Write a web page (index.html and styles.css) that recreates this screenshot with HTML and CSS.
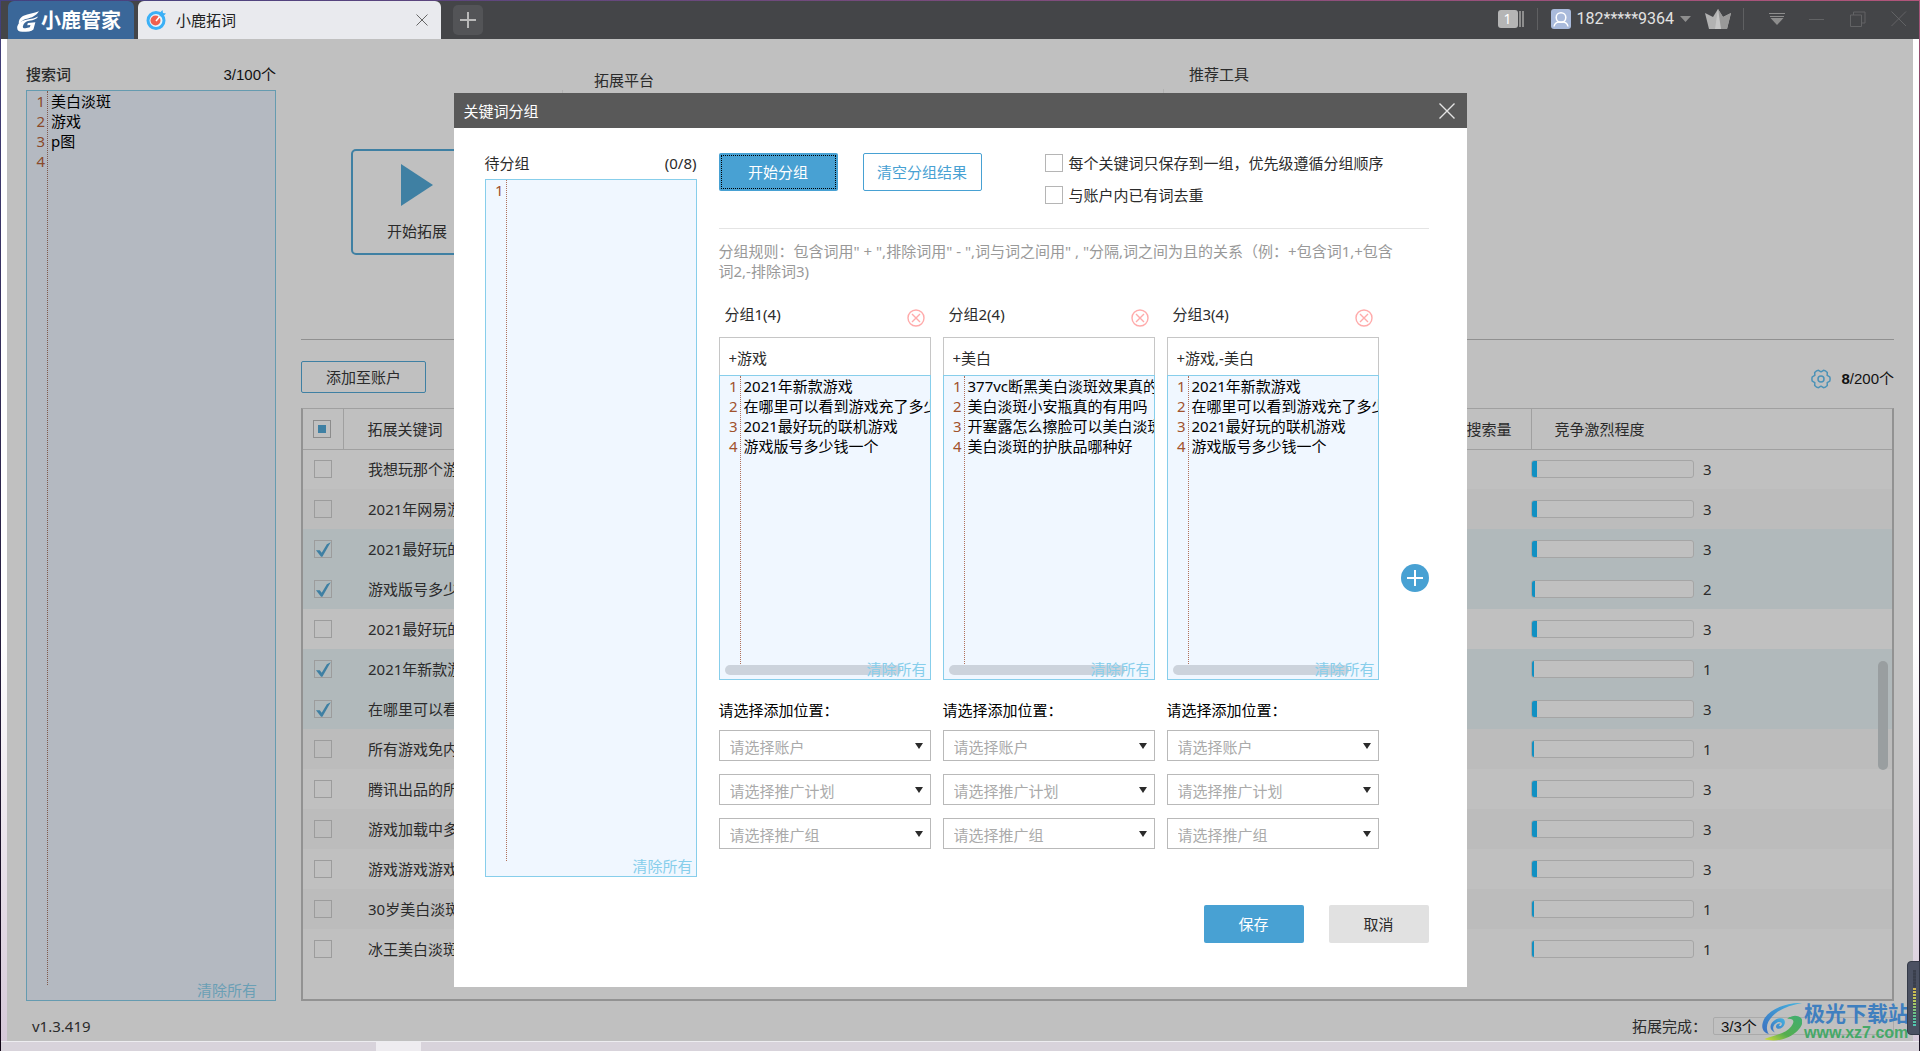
FILE: index.html
```html
<!DOCTYPE html>
<html lang="zh-CN">
<head>
<meta charset="utf-8">
<title>小鹿拓词</title>
<link rel="stylesheet" href="styles.css">
</head>
<body>
<div class="window">
  <header class="titlebar">
    <a class="brand" href="#">
      <svg class="brand-icon" viewBox="0 0 67 63" aria-hidden="true"><path d="M67 0C58 14 46 19 27 24 18 27 12 31 6 40 4 30 8 20 20 14 34 7 52 6 67 0Z"/><path d="M64 16C60 24 52 27 37 29 28 30 20 36 18 46 17 51 21 53 26 52L39 49 41 42 31 43 33 36 56 34 50 56C44 62 32 63 16 63 3 63-1 56 1 46 4 35 13 29 28 26 44 23 56 21 64 16Z"/></svg>
      <span>小鹿管家</span>
    </a>
    <div class="tab">
      <svg class="tab-icon" viewBox="0 0 20 20" aria-hidden="true"><circle cx="10" cy="10.500" r="8" fill="#e8f6fe" stroke="#3bb0f6" stroke-width="3"/><circle cx="9.500" cy="10.500" r="5" fill="#f0604f"/><path d="M10 11 15 5" stroke="#fff" stroke-width="1.500"/><path d="M13.500 6.500 14 2.500 16.500 0 17 3 20 3.500 17.500 6Z" fill="#3bb0f6"/></svg>
      <span class="tab-title">小鹿拓词</span>
      <button class="icon-button" aria-label="关闭标签"><svg class="i12" viewBox="0 0 12 12"><path d="M.5.5 11.500 11.500M11.500.5.5 11.500" stroke="#666"/></svg></button>
    </div>
    <button class="new-tab" aria-label="新建标签"><svg class="i16" viewBox="0 0 16 16"><path d="M8 0V16M0 8H16" stroke="#b9b9b9" stroke-width="2"/></svg></button>
    <div class="titlebar-tools">
      <span class="badge-stack"><b>1</b><i></i><i></i></span>
      <span class="rule"></span>
      <button class="account">
        <svg class="i20" viewBox="0 0 20 20" aria-hidden="true"><rect width="20" height="20" rx="3" fill="#a9badb"/><circle cx="10" cy="8.500" r="4.800" fill="none" stroke="#fff" stroke-width="1.500"/><path d="M3 17.500C3.500 14 6 12.500 10 13.300 14 12.500 16.500 14 17 17.500" fill="none" stroke="#fff" stroke-width="1.500"/></svg>
        <span>182*****9364</span>
        <svg class="caret" viewBox="0 0 11 6" aria-hidden="true"><path d="M0 0H11L5.500 6Z" fill="#8e8e8e"/></svg>
      </button>
      <svg class="crown" viewBox="0 0 26 20" aria-hidden="true"><path d="M0 4 8 8 13 0 18 8 26 4 22 20H4Z" fill="#b2b2b2"/><path d="M13 0 18 8 26 4 22 20H14Z" fill="#999"/><path d="M13 0 16 20H10Z" fill="#c6c6c6"/></svg>
      <span class="rule"></span>
      <button class="icon-button menu" aria-label="菜单"><svg class="i16" viewBox="0 0 16 16"><path d="M0 2.500H16M1 5.500H15" stroke="#8d8d8d"/><path d="M1.500 7H14.500L8 14Z" fill="#8d8d8d"/></svg></button>
      <button class="icon-button" aria-label="最小化"><svg class="i16" viewBox="0 0 16 16"><path d="M0 8.500H15" stroke="#626365"/></svg></button>
      <button class="icon-button" aria-label="还原"><svg class="i16" viewBox="0 0 16 16"><path d="M.5 4H11.500V15.500H.5ZM3.500 4V1H15V12H12" fill="none" stroke="#626365"/></svg></button>
      <button class="icon-button" aria-label="关闭"><svg class="i16" viewBox="0 0 16 16"><path d="M.5.5 15 15M15 .5.5 15" stroke="#626365"/></svg></button>
    </div>
  </header>

  <div class="app">
    <main class="workspace">
      <section class="search-panel">
        <div class="panel-head"><label for="search-words">搜索词</label><span class="count">3/100个</span></div>
        <div class="editor editor-dim">
          <div class="line-numbers">1<br>2<br>3<br>4</div>
          <textarea id="search-words" wrap="off">美白淡斑
游戏
p图
</textarea>
          <button class="clear">清除所有</button>
        </div>
      </section>

      <section class="results">
        <div class="setup">
          <div class="start-cell">
            <button class="start"><svg viewBox="0 0 32 42" aria-hidden="true"><path d="M0 0 32 21 0 42Z" fill="#3f80a3"/></svg><span>开始拓展</span></button>
          </div>
          <div class="setup-col setup-platform"><h2>拓展平台</h2><div class="setup-body"></div></div>
          <div class="setup-col setup-tools"><h2>推荐工具</h2><div class="setup-body"></div></div>
        </div>
        <div class="toolbar">
          <button class="add-account">添加至账户</button>
          <div class="quota">
            <svg class="i20" viewBox="0 0 20 20" aria-hidden="true"><g fill="none" stroke="#4b92b7" stroke-width="1.500" stroke-linejoin="round"><path d="M18.700 12.200 16.200 13.600 16.300 16.500 Q14.500 18.500 12.500 18.700L10 17.200 7.500 18.700Q5.500 18.500 3.700 16.500L3.800 13.600 1.300 12.200Q.5 10 1.300 7.800L3.800 6.400 3.700 3.500Q5.500 1.500 7.500 1.300L10 2.800 12.500 1.300Q14.500 1.500 16.300 3.500L16.200 6.400 18.700 7.800Q19.500 10 18.700 12.200Z"/><circle cx="10" cy="10" r="3"/></g></svg>
            <span class="count"><b>8</b>/200个</span>
          </div>
        </div>
        <div class="table-wrap">
          <table>
            <colgroup><col class="col-check"><col><col class="col-volume"><col class="col-level"></colgroup>
            <thead>
              <tr><th class="check"><input type="checkbox" class="mixed" aria-label="全选"></th><th class="word">拓展关键词</th><th class="volume">搜索量</th><th class="level-head">竞争激烈程度</th></tr>
            </thead>
            <tbody>
              <tr><td class="check"><input type="checkbox" aria-label="选择"></td><td class="word">我想玩那个游</td><td></td><td><div class="level"><span class="bar"><i style="width:3%"></i></span>3</div></td></tr>
              <tr><td class="check"><input type="checkbox" aria-label="选择"></td><td class="word">2021年网易游</td><td></td><td><div class="level"><span class="bar"><i style="width:3%"></i></span>3</div></td></tr>
              <tr class="selected"><td class="check"><input type="checkbox" checked aria-label="选择"></td><td class="word">2021最好玩的</td><td></td><td><div class="level"><span class="bar"><i style="width:3%"></i></span>3</div></td></tr>
              <tr class="selected"><td class="check"><input type="checkbox" checked aria-label="选择"></td><td class="word">游戏版号多少</td><td></td><td><div class="level"><span class="bar"><i style="width:2%"></i></span>2</div></td></tr>
              <tr><td class="check"><input type="checkbox" aria-label="选择"></td><td class="word">2021最好玩的</td><td></td><td><div class="level"><span class="bar"><i style="width:3%"></i></span>3</div></td></tr>
              <tr class="selected"><td class="check"><input type="checkbox" checked aria-label="选择"></td><td class="word">2021年新款游</td><td></td><td><div class="level"><span class="bar"><i style="width:1%"></i></span>1</div></td></tr>
              <tr class="selected"><td class="check"><input type="checkbox" checked aria-label="选择"></td><td class="word">在哪里可以看</td><td></td><td><div class="level"><span class="bar"><i style="width:3%"></i></span>3</div></td></tr>
              <tr><td class="check"><input type="checkbox" aria-label="选择"></td><td class="word">所有游戏免内</td><td></td><td><div class="level"><span class="bar"><i style="width:1%"></i></span>1</div></td></tr>
              <tr><td class="check"><input type="checkbox" aria-label="选择"></td><td class="word">腾讯出品的所</td><td></td><td><div class="level"><span class="bar"><i style="width:3%"></i></span>3</div></td></tr>
              <tr><td class="check"><input type="checkbox" aria-label="选择"></td><td class="word">游戏加载中多</td><td></td><td><div class="level"><span class="bar"><i style="width:3%"></i></span>3</div></td></tr>
              <tr><td class="check"><input type="checkbox" aria-label="选择"></td><td class="word">游戏游戏游戏</td><td></td><td><div class="level"><span class="bar"><i style="width:3%"></i></span>3</div></td></tr>
              <tr><td class="check"><input type="checkbox" aria-label="选择"></td><td class="word">30岁美白淡斑</td><td></td><td><div class="level"><span class="bar"><i style="width:1%"></i></span>1</div></td></tr>
              <tr><td class="check"><input type="checkbox" aria-label="选择"></td><td class="word">冰王美白淡斑</td><td></td><td><div class="level"><span class="bar"><i style="width:1%"></i></span>1</div></td></tr>
            </tbody>
          </table>
          <span class="scroll-thumb"></span>
        </div>
      </section>

      <footer class="status">
        <span>v1.3.419</span>
        <div class="progress"><span>拓展完成：</span><span class="progress-box count">3/3个</span></div>
      </footer>
    </main>

    <div class="overlay">
      <div class="dialog" role="dialog" aria-labelledby="dialog-title">
        <div class="dialog-head">
          <h1 id="dialog-title">关键词分组</h1>
          <button class="icon-button" aria-label="关闭"><svg class="i16" viewBox="0 0 16 16"><path d="M.5.5 15.500 15.500M15.500.5.5 15.500" stroke="#e4e4e4" stroke-width="1.400"/></svg></button>
        </div>
        <div class="dialog-body">
          <section class="pending">
            <div class="pending-head"><label for="pending-words">待分组</label><span>(0/8)</span></div>
            <div class="editor">
              <div class="line-numbers">1</div>
              <textarea id="pending-words" wrap="off"></textarea>
              <button class="clear">清除所有</button>
            </div>
          </section>
          <section class="grouping">
            <div class="actions">
              <button class="btn btn-primary btn-focus">开始分组</button>
              <button class="btn btn-outline">清空分组结果</button>
              <div class="options">
                <label><input type="checkbox">每个关键词只保存到一组，优先级遵循分组顺序</label>
                <label><input type="checkbox">与账户内已有词去重</label>
              </div>
            </div>
            <p class="rules">分组规则：包含词用" + ",排除词用" - ",词与词之间用" , "分隔,词之间为且的关系（例：+包含词1,+包含<br>词2,-排除词3)</p>
            <div class="groups-row">
              <div class="groups">
                <article class="group">
                  <div class="group-head"><label for="rule-1">分组1(4)</label><button class="icon-button" aria-label="删除分组1"><svg class="i18" viewBox="0 0 18 18"><g fill="none" stroke="#ffabab" stroke-width="1.400"><circle cx="9" cy="9" r="8"/><path d="M5 5 13 13M13 5 5 13"/></g></svg></button></div>
                  <input id="rule-1" class="rule-input" type="text" value="+游戏">
                  <div class="editor">
                    <div class="line-numbers">1<br>2<br>3<br>4</div>
                    <textarea wrap="off" aria-label="分组1关键词">2021年新款游戏
在哪里可以看到游戏充了多少
2021最好玩的联机游戏
游戏版号多少钱一个</textarea>
                    <span class="h-thumb"></span>
                    <button class="clear">清除所有</button>
                  </div>
                  <fieldset>
                    <legend>请选择添加位置：</legend>
                    <span class="select"><select aria-label="账户"><option>请选择账户</option></select></span>
                    <span class="select"><select aria-label="推广计划"><option>请选择推广计划</option></select></span>
                    <span class="select"><select aria-label="推广组"><option>请选择推广组</option></select></span>
                  </fieldset>
                </article>
                <article class="group">
                  <div class="group-head"><label for="rule-2">分组2(4)</label><button class="icon-button" aria-label="删除分组2"><svg class="i18" viewBox="0 0 18 18"><g fill="none" stroke="#ffabab" stroke-width="1.400"><circle cx="9" cy="9" r="8"/><path d="M5 5 13 13M13 5 5 13"/></g></svg></button></div>
                  <input id="rule-2" class="rule-input" type="text" value="+美白">
                  <div class="editor">
                    <div class="line-numbers">1<br>2<br>3<br>4</div>
                    <textarea wrap="off" aria-label="分组2关键词">377vc断黑美白淡斑效果真的
美白淡斑小安瓶真的有用吗
开塞露怎么擦脸可以美白淡斑
美白淡斑的护肤品哪种好</textarea>
                    <span class="h-thumb"></span>
                    <button class="clear">清除所有</button>
                  </div>
                  <fieldset>
                    <legend>请选择添加位置：</legend>
                    <span class="select"><select aria-label="账户"><option>请选择账户</option></select></span>
                    <span class="select"><select aria-label="推广计划"><option>请选择推广计划</option></select></span>
                    <span class="select"><select aria-label="推广组"><option>请选择推广组</option></select></span>
                  </fieldset>
                </article>
                <article class="group">
                  <div class="group-head"><label for="rule-3">分组3(4)</label><button class="icon-button" aria-label="删除分组3"><svg class="i18" viewBox="0 0 18 18"><g fill="none" stroke="#ffabab" stroke-width="1.400"><circle cx="9" cy="9" r="8"/><path d="M5 5 13 13M13 5 5 13"/></g></svg></button></div>
                  <input id="rule-3" class="rule-input" type="text" value="+游戏,-美白">
                  <div class="editor">
                    <div class="line-numbers">1<br>2<br>3<br>4</div>
                    <textarea wrap="off" aria-label="分组3关键词">2021年新款游戏
在哪里可以看到游戏充了多少
2021最好玩的联机游戏
游戏版号多少钱一个</textarea>
                    <span class="h-thumb"></span>
                    <button class="clear">清除所有</button>
                  </div>
                  <fieldset>
                    <legend>请选择添加位置：</legend>
                    <span class="select"><select aria-label="账户"><option>请选择账户</option></select></span>
                    <span class="select"><select aria-label="推广计划"><option>请选择推广计划</option></select></span>
                    <span class="select"><select aria-label="推广组"><option>请选择推广组</option></select></span>
                  </fieldset>
                </article>
              </div>
              <button class="icon-button add-group" aria-label="添加分组"><svg class="i28" viewBox="0 0 28 28"><circle cx="14" cy="14" r="14" fill="#48a1d3"/><path d="M14 6V22M6 14H22" stroke="#fff" stroke-width="2"/></svg></button>
            </div>
          </section>
        </div>
        <div class="dialog-foot">
          <button class="btn btn-primary btn-small">保存</button>
          <button class="btn btn-muted btn-small">取消</button>
        </div>
      </div>
    </div>

    <div class="watermark">
      <svg viewBox="0 0 125 117" aria-hidden="true">
        <defs><linearGradient id="wb" x1="0" y1="1" x2="1" y2="0"><stop offset="0" stop-color="#3a6fc0"/><stop offset="1" stop-color="#45b4e0"/></linearGradient><linearGradient id="wg" x1="0" y1="1" x2="1" y2="0"><stop offset="0" stop-color="#d6de3c"/><stop offset=".4" stop-color="#55ad50"/><stop offset="1" stop-color="#3fae72"/></linearGradient></defs>
        <path d="M125 2C80 0 30 18 10 50-2 74 4 92 24 97 12 78 18 56 42 36 62 18 92 8 125 2Z" fill="url(#wb)"/>
        <path d="M42 92C24 84 24 64 46 52 64 44 76 50 72 66 68 78 52 86 46 76 44 68 54 62 60 66 54 68 54 74 60 72 68 66 62 58 52 60 38 66 32 78 42 92Z" fill="url(#wb)"/>
        <path d="M122 48C110 36 92 40 80 50 100 48 104 58 92 74 78 94 48 98 10 112 44 124 88 110 110 88 126 72 130 58 122 48Z" fill="url(#wg)"/>
      </svg>
      <div><strong>极光下载站</strong><span>www.xz7.com</span></div>
    </div>
  </div>
  <div class="desktop-strip"><span></span></div>
  <div class="volume-widget"><span></span></div>
</div>
</body>
</html>
```
FILE: styles.css
```css
* { box-sizing: border-box; }

body {
  margin: 0;
  font: 15px/20px "Noto Sans", "Noto Sans CJK SC", sans-serif;
  color: #2b2b2b;
  background: linear-gradient(90deg, #43417f, #b1557a) top / 100% 2px no-repeat,
    linear-gradient(#44417c, #100515) left / 2px 100% no-repeat,
    linear-gradient(#a9547a, #3a2a38 30%, #1b1424) #d8d3db;
}

h1, h2, p, fieldset { margin: 0; padding: 0; border: 0; font-size: 15px; font-weight: 400; }
button, input, textarea, select { font: inherit; color: inherit; margin: 0; }
button { padding: 0; border: 0; background: none; cursor: pointer; }
svg { display: block; flex: none; }

.window {
  position: relative;
  display: flex;
  flex-direction: column;
  min-height: 100vh;
  padding: 1px 1px 0;
}

.i12 { width: 12px; height: 12px; }
.i16 { width: 16px; height: 16px; }
.i18 { width: 18px; height: 18px; }
.i20 { width: 20px; height: 20px; }
.i28 { width: 28px; height: 28px; }
.icon-button { flex: none; display: block; }
.count { font-family: "Liberation Sans", "Noto Sans CJK SC", sans-serif; color: #111; }

/* Title bar */
.titlebar { display: flex; height: 38px; padding-left: 7px; background: #444548; }
.brand {
  display: flex;
  align-items: center;
  gap: 2px;
  width: 126px;
  padding: 2px 0 0 9px;
  border-radius: 6px 6px 0 0;
  background: #3a6799;
  color: #fff;
  font-size: 20px;
  font-weight: 700;
  text-decoration: none;
}
.brand-icon { width: 22px; height: 21px; fill: #fff; }
.tab {
  display: flex;
  align-items: center;
  width: 303px;
  margin-left: 4px;
  padding: 0 13px 0 8px;
  border-radius: 6px 6px 0 0;
  background: #e9eaee;
  color: #222;
}
.tab-icon { width: 20px; height: 20px; }
.tab-title { flex: 1; padding-left: 10px; }
.new-tab {
  display: grid;
  place-items: center;
  width: 30px;
  height: 30px;
  margin: 4px 0 0 12px;
  border-radius: 5px;
  background: #535457;
}
.titlebar-tools { display: flex; align-items: center; margin: 0 12px 0 auto; height: 36px; color: #e2e2e2; }
.titlebar-tools .rule { width: 1px; height: 22px; margin: 0 13px; background: #5f6062; }
.badge-stack { display: flex; align-items: center; gap: 1px; }
.badge-stack b { width: 20px; height: 18px; border-radius: 3px; background: #b5b5b5; color: #fff; font-size: 14px; font-weight: 400; line-height: 18px; text-align: center; }
.badge-stack i { width: 2px; height: 16px; background: #8e8e8e; }
.account { display: flex; align-items: center; gap: 6px; margin-right: 14px; font: 16px/20px Roboto, sans-serif; }
.caret { width: 11px; height: 6px; }
.crown { width: 26px; height: 20px; }
.titlebar-tools .crown + .rule { margin: 0 25px 0 12px; }
.titlebar-tools .icon-button + .icon-button { margin-left: 25px; }
.titlebar-tools .menu + .icon-button { margin-left: 24px; }

/* Application area */
.app {
  position: relative;
  flex: 1;
  display: flex;
  padding: 0 6px;
  background: linear-gradient(#fff 0 60%, #d5c8d8);
}
.workspace {
  flex: 1;
  min-width: 0;
  display: grid;
  grid-template: 1fr 40px / 250px minmax(0, 1fr);
  column-gap: 25px;
  padding: 0 19px;
  background: #c0c0c0;
}
.search-panel { display: flex; flex-direction: column; padding-top: 25px; }
.panel-head { display: flex; justify-content: space-between; height: 26px; }
.panel-head label { font-weight: 500; }
.panel-head .count { padding-top: 1px; }

/* Numbered text editor */
.editor { position: relative; display: flex; flex: 1; border: 1px solid #87ceeb; background: #f0f7ff; }
.line-numbers {
  flex: none;
  width: 21px;
  margin-bottom: 15px;
  padding-right: 2px;
  border-right: 1px dotted #b0705a;
  color: #a0522d;
  text-align: right;
}
.editor textarea {
  flex: 1;
  width: 0;
  padding: 0 0 0 3px;
  border: 0;
  outline: 0;
  resize: none;
  overflow: hidden;
  background: none;
  color: #000;
}
.clear { position: absolute; right: 3px; bottom: 0; color: #87ceeb; }
.editor-dim { border-color: #659bb0; background: #b4b9c1; }
.editor-dim .line-numbers { border-color: #80584a; color: #8a4a2a; }
.editor-dim .clear { right: 18px; color: #6a9fb5; }
.h-thumb { position: absolute; left: 5px; bottom: 4px; width: 84%; height: 10px; border-radius: 5px; background: #ccd3dc; }

/* Results */
.results { display: flex; flex-direction: column; }
.setup { display: grid; grid-template-columns: 261px 601fr 731fr; height: 301px; border-bottom: 1px solid #909090; }
.start-cell { padding: 110px 0 0 50px; }
.start {
  display: flex;
  flex-direction: column;
  align-items: center;
  gap: 15px;
  width: 132px;
  height: 106px;
  padding-top: 13px;
  border: 2px solid #3f80a3;
  border-radius: 5px;
}
.start svg { width: 32px; height: 42px; }
.setup-col { display: flex; flex-direction: column; padding-bottom: 20px; }
.setup-platform h2 { padding: 31px 0 0 32px; }
.setup-tools h2 { padding: 25px 0 5px 26px; }
.setup-body { flex: 1; border-left: 1px solid #b2b2b2; }
.toolbar { display: flex; justify-content: space-between; align-items: center; height: 68px; padding: 6px 0 0; }
.add-account { width: 125px; height: 32px; border: 1px solid #3f80a3; border-radius: 2px; }
.quota { display: flex; align-items: center; gap: 10px; padding-top: 4px; }

.table-wrap { position: relative; flex: 1; border: 2px solid #929292; border-top: 1px solid #a0a0a0; }
table { width: 100%; table-layout: fixed; border-collapse: collapse; }
.col-check { width: 40px; }
.col-volume { width: 120px; }
.col-level { width: 361px; }
th, td { height: 40px; padding: 0; font-weight: 400; text-align: left; white-space: nowrap; }
th { border-bottom: 1px solid #a0a0a0; }
th.check, th.volume { border-right: 1px solid #a0a0a0; }
th.volume { padding-right: 19px; text-align: right; }
th.level-head { padding-left: 23px; }
.word { padding-left: 25px; }
th.word { padding-left: 24px; }
tbody tr:nth-child(even) { background: #bcbcbc; }
tbody tr.selected { background: #b1b9bb; }
.level { display: flex; align-items: center; gap: 9px; }
.bar { width: 163px; height: 18px; border: 1px solid #a5a5a5; border-radius: 3px; background: #c0c0c0; overflow: hidden; }
.bar i { display: block; height: 100%; background: #1190c2; }
.scroll-thumb { position: absolute; right: 4px; top: 252px; width: 10px; height: 109px; border-radius: 5px; background: #999ea0; }

input[type="checkbox"] {
  appearance: none;
  display: block;
  position: relative;
  flex: none;
  width: 18px;
  height: 18px;
  border: 1px solid #b5b5b5;
}
input[type="checkbox"]:checked::before {
  content: "";
  display: block;
  height: 16px;
  background: #3f80a3;
  clip-path: polygon(6% 58%, 30% 58%, 42% 74%, 74% 20%, 98% 8%, 46% 98%, 38% 98%);
}
td.check input[type="checkbox"] { margin-left: 11px; border-color: #9c9c9c; }
th.check input[type="checkbox"] { margin-left: 10px; border-color: #8c8c8c; }
input.mixed::before { content: ""; display: block; width: 8px; height: 8px; margin: 4px; background: #3f80a3; }

.status { grid-column: 1 / -1; display: flex; justify-content: space-between; align-items: center; padding: 10px 0 0 6px; }
.progress { display: flex; align-items: center; gap: 6px; }
.progress-box { width: 181px; height: 18px; padding-left: 7px; border: 1px solid #aaa; border-radius: 2px; line-height: 18px; }

/* Dialog */
.overlay { position: absolute; inset: 0; display: flex; align-items: center; justify-content: center; }
.dialog { width: 1013px; max-width: 100%; background: #fff; }
.dialog-head { display: flex; justify-content: space-between; align-items: center; height: 35px; padding: 0 12px 0 10px; background: #595959; color: #fff; }
.dialog-body { display: grid; grid-template-columns: 212px minmax(0, 1fr); gap: 22px; padding: 25px 38px 0 31px; }
.pending { display: flex; flex-direction: column; gap: 6px; }
.pending-head { display: flex; justify-content: space-between; }
.pending .editor { min-height: 698px; }
.actions { display: flex; align-items: flex-start; height: 76px; border-bottom: 1px solid #e4e4e4; }
.btn { width: 119px; height: 38px; border-radius: 2px; }
.btn + .btn-outline { margin-left: 25px; }
.btn-primary { background: #48a1d3; color: #fff; }
.btn-focus { outline: 1px dotted #000; outline-offset: -3px; }
.btn-outline { border: 1px solid #48a1d3; color: #48a1d3; }
.btn-muted { background: #e1e1e1; }
.btn-small { width: 100px; }
.options { display: grid; gap: 12px; padding-left: 63px; }
.options label { display: flex; align-items: center; gap: 6px; }
.rules { padding: 12px 0 23px; color: #999; }
.groups-row { display: flex; align-items: flex-start; gap: 22px; }
.groups { flex: 1; display: grid; grid-template-columns: repeat(3, minmax(0, 1fr)); gap: 12px; }
.group-head { display: flex; justify-content: space-between; align-items: flex-start; height: 33px; padding: 0 6px; }
.group-head .icon-button { padding-top: 5px; }
.rule-input { display: block; width: 100%; height: 38px; padding: 2px 9px 0; border: 1px solid #c6c6c6; border-bottom: 0; outline: 0; background: #fff; }
.group .editor { height: 305px; }
.group fieldset { display: grid; gap: 13px; min-width: 0; padding-top: 10px; margin-top: 20px; }
.group legend { padding: 0; color: #000; }
.select { position: relative; display: block; }
.select select { appearance: none; display: block; width: 100%; height: 31px; padding: 2px 10px 0; border: 1px solid #b9b9b9; border-radius: 0; background: #fff; color: #aaa; }
.select::after { content: ""; position: absolute; right: 8px; top: 13px; border: 4px solid transparent; border-top: 6px solid #2b2b2b; border-bottom: 0; pointer-events: none; }
.add-group { margin-top: 260px; }
.dialog-foot { display: flex; justify-content: flex-end; gap: 25px; padding: 28px 38px 44px; }

/* Site mark and desktop edges */
.watermark { position: absolute; right: 10px; bottom: 0; display: flex; align-items: flex-end; gap: 2px; }
.watermark svg { width: 41px; height: 39px; }
.watermark strong { display: block; color: #3f7fbf; font-size: 21px; line-height: 22px; }
.watermark span { display: block; color: #45a868; font: bold 16px/17px "Liberation Sans", sans-serif; }
.desktop-strip { height: 10px; padding-left: 375px; border-top: 1px solid #ededf0; background: #d8d3db; }
.desktop-strip span { display: block; width: 45px; height: 9px; background: #eeecf0; }
.volume-widget { position: absolute; right: 0; bottom: 16px; width: 13px; height: 74px; padding: 8px 3px 8px 5px; border: 1px solid #343a48; border-radius: 4px 0 0 4px; background: #4b5162; }
.volume-widget span { display: block; height: 100%; background: repeating-linear-gradient(transparent 0 2px, #3e4453 2px 3px), linear-gradient(#3a3f4c 0 30%, #d6b44c 31%, #b9c95c 55%, #63c08c 80%, #4fc7b4); }
```
